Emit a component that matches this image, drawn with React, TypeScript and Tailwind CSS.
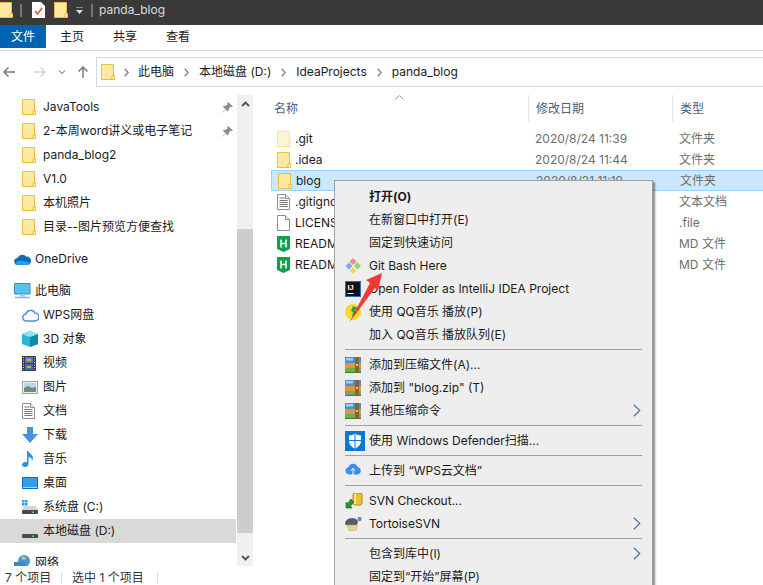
import React from 'react';

const FolderIcon = ({ faded = false }: { faded?: boolean }) => (
  <svg width="14" height="16" viewBox="0 0 14 16" className={faded ? 'shrink-0 opacity-45' : 'shrink-0'}>
    <path d="M.5.5h12v13h-1.5v2H.5z" fill="#fde9a0" stroke="#e9bc45" />
    <path d="M11 11.5h2.5v4H11z" fill="#fff3c4" stroke="#e9bc45" />
  </svg>
);

const DocIcon = ({ lines = false }: { lines?: boolean }) => (
  <svg width="13" height="16" viewBox="0 0 13 16" className="shrink-0">
    <path d="M.5.5h8l4 4v11H.5z" fill="#fff" stroke="#8f8f8f" />
    <path d="M8.5.5v4h4" fill="#eee" stroke="#8f8f8f" />
    {lines && <path d="M2.5 4h5M2.5 6.500h8M2.500 8.500h8M2.500 10.500h8M2.500 12.500h8" stroke="#777" />}
  </svg>
);

const HtmlIcon = () => (
  <svg width="13" height="16" viewBox="0 0 13 16" className="shrink-0">
    <path d="M0 0h13v13l-6.500 3L0 13z" fill="#13a04c" />
    <path d="M4 3.500v8M9 3.500v8M4 7.500h5" stroke="#fff" strokeWidth="1.500" fill="none" />
  </svg>
);

const Pin = () => (
  <svg width="11" height="11" viewBox="0 0 11 11" className="shrink-0">
    <path d="M6.500.5l4 4-1 .5-1-.5-2 2 0 2-1 .5-4-4 .5-1h2l2-2-.5-1zM3 7.500L.5 10.500" fill="#8b8b8b" stroke="#8b8b8b" strokeWidth=".6" />
  </svg>
);

const Crumb = () => (
  <svg width="5" height="9" viewBox="0 0 5 9" className="shrink-0">
    <path d="M.7.7l3.500 3.800L.7 8.300" fill="none" stroke="#808080" strokeWidth="1.300" />
  </svg>
);

const CloudSmall = () => (
  <svg width="17" height="11" viewBox="0 0 17 11" className="shrink-0">
    <path d="M4 11a3.500 3.500 0 0 1-.5-7A5 5 0 0 1 12 2.500 4.200 4.200 0 0 1 13.500 11z" fill="#0f6cbd" />
    <path d="M1 9c3-3 9-3 15 0l-2.500 2H4z" fill="#2a9be6" />
  </svg>
);

const MonitorIcon = () => (
  <svg width="17" height="16" viewBox="0 0 17 16" className="shrink-0">
    <path d="M.500.500h15.500v10.500H.500z" fill="#57c2ee" stroke="#4b87b8" />
    <path d="M6 11h5v2.500H6z" fill="#a7c7dd" />
    <path d="M1 14.500h15" stroke="#9ab1c4" strokeWidth="1.500" />
  </svg>
);

const WpsCloud = () => (
  <svg width="17" height="13" viewBox="0 0 17 13" className="shrink-0">
    <path d="M4.500 12a3.500 3.500 0 0 1-.5-7A4.700 4.700 0 0 1 12.800 4 4 4 0 0 1 13 12z" fill="#fff" stroke="#4e8df0" strokeWidth="1.500" />
  </svg>
);

const CubeIcon = () => (
  <svg width="16" height="16" viewBox="0 0 16 16" className="shrink-0">
    <path d="M8 0l8 3v10l-8 3-8-3V3z" fill="#2bb6cf" />
    <path d="M8 6l8-3v10l-8 3z" fill="#0f8aa6" />
    <path d="M8 0l8 3-8 3-8-3z" fill="#8fe6ef" />
  </svg>
);

const FilmIcon = () => (
  <svg width="14" height="15" viewBox="0 0 14 15" className="shrink-0">
    <rect width="14" height="15" fill="#3b3b40" />
    <rect x="3" y="1" width="8" height="6" fill="#5a76c9" />
    <rect x="3" y="8" width="8" height="6" fill="#4a65bc" />
    <rect x="5" y="3" width="4" height="2" fill="#d7b23a" />
    <rect x="5" y="10" width="4" height="2" fill="#d7b23a" />
    <path d="M1.500 1v13M12.500 1v13" stroke="#ddd" strokeDasharray="1 1.500" />
  </svg>
);

const PictureIcon = () => (
  <svg width="16" height="13" viewBox="0 0 16 13" className="shrink-0">
    <rect x=".5" y=".5" width="15" height="12" fill="#e8eef2" stroke="#a0a0a0" />
    <rect x="2" y="2" width="12" height="5" fill="#bcd6e8" />
    <path d="M2 7l4-2 4 2 4-1v5H2z" fill="#6d8d76" />
  </svg>
);

const DownIcon = () => (
  <svg width="16" height="16" viewBox="0 0 16 16" className="shrink-0">
    <path d="M5 0h6v7h5l-8 9-8-9h5z" fill="#4a90dc" />
  </svg>
);

const MusicIcon = () => (
  <svg width="12" height="16" viewBox="0 0 12 16" className="shrink-0">
    <path d="M5 0h1.500c.3 3 4.500 3.500 4.500 7 0 1-.4 2-1 2.500.2-2-2-3.500-3.500-3.800V13c0 1.700-1.500 3-3.500 3C1.500 16 0 15.200 0 13.800 0 12.200 1.700 11 3.500 11c.6 0 1.100.1 1.500.3z" fill="#1e96ea" />
  </svg>
);

const DesktopIcon = () => (
  <svg width="16" height="12" viewBox="0 0 16 12" className="shrink-0">
    <rect width="16" height="12" fill="#0d6fc4" />
    <path d="M1 1h14v9H1z" fill="#2f9eea" />
    <path d="M1 10h14v1H1z" fill="#fff" opacity=".7" />
  </svg>
);

const DriveIcon = ({ windows = false }: { windows?: boolean }) => (
  <svg width="16" height="14" viewBox="0 0 16 14" className="shrink-0">
    {windows && <path d="M0 0h2.500v2.500H0zM3 0h2.500v2.500H3zM0 3h2.500v2.500H0zM3 3h2.500v2.500H3z" fill="#16a5e8" />}
    <path d="M2 6h12l2 4H0z" fill="#d6d6d6" />
    <rect y="10" width="16" height="4" rx="1" fill="#47494b" />
    <rect x="10" y="11.500" width="2" height="1.500" fill="#52d45c" />
  </svg>
);

const NetworkIcon = () => (
  <svg width="17" height="16" viewBox="0 0 17 16" className="shrink-0">
    <circle cx="10" cy="6" r="6" fill="#4f95d6" />
    <path d="M7 2c2-1 5 0 5 2l-3 1z" fill="#a7d2a0" />
    <rect y="7" width="11" height="8" fill="#3f88c5" />
  </svg>
);

const GitIcon = () => (
  <svg width="16" height="16" viewBox="0 0 16 16">
    <path d="M8 0l3.500 3.500L8 7 4.500 3.500z" fill="#ef8d8d" />
    <path d="M12 4l4 4-3.500 3.500L9 8z" fill="#93d66c" />
    <path d="M8 9l3.500 3.500L8 16l-3.500-3.500z" fill="#f4d75e" />
    <path d="M4 4.500L7.500 8 4 11.500.5 8z" fill="#7da6f0" />
  </svg>
);

const IdeaIcon = () => (
  <svg width="16" height="16" viewBox="0 0 16 16">
    <rect x=".5" y=".5" width="15" height="15" fill="#111" stroke="#1f6fd6" />
    <text x="2.500" y="9" fontSize="7.500" fontWeight="700" fill="#fff" fontFamily="Liberation Sans, sans-serif">IJ</text>
    <path d="M2.500 12.500h6" stroke="#fff" />
  </svg>
);

const QQIcon = () => (
  <svg width="16" height="16" viewBox="0 0 16 16">
    <circle cx="8" cy="8" r="8" fill="#f6d92e" />
    <path d="M8 2l5 2-3 2 2 3-5 4 1-5-2-1z" fill="#24a556" />
  </svg>
);

const RarIcon = () => (
  <svg width="16" height="16" viewBox="0 0 16 16">
    <rect width="16" height="6" fill="#4a8fd0" />
    <path d="M1 1h7v2.500H1z" fill="#9ccbee" />
    <rect y="6" width="16" height="5" fill="#e4943f" />
    <rect y="11" width="16" height="3.500" fill="#6ab04f" />
    <rect y="14.500" width="16" height="1.500" fill="#3e7d30" />
    <rect x="10" width="4" height="16" fill="#8a6238" />
    <rect x="11" y="7" width="2" height="2" fill="#e8c65a" />
  </svg>
);

const ShieldIcon = () => (
  <svg width="20" height="20" viewBox="0 0 20 20">
    <rect width="20" height="20" fill="#0a78d7" />
    <path d="M10 2.500c2 1.500 4 2 6 2v5c0 4-2.500 6.500-6 8-3.500-1.500-6-4-6-8v-5c2 0 4-.5 6-2z" fill="#fff" />
    <path d="M10 2.500v15M4 9.500h12" stroke="#0a78d7" strokeWidth="1" />
  </svg>
);

const UploadIcon = () => (
  <svg width="16" height="15" viewBox="0 0 16 15">
    <path d="M4 11.500a3.700 3.700 0 0 1-.6-7.300A4.800 4.800 0 0 1 12.600 4 3.800 3.800 0 0 1 12.500 11.500z" fill="#3f8cf0" />
    <path d="M8 14.500V5.500M5.800 7.800L8 5.500l2.200 2.300" stroke="#fff" fill="none" />
  </svg>
);

const SvnIcon = () => (
  <svg width="18" height="16" viewBox="0 0 18 16">
    <rect x="8" width="9" height="12" rx="2" fill="#edc12f" stroke="#b58a12" />
    <path d="M10 1v10" stroke="#fff2a8" strokeWidth="1.500" />
    <path d="M1 15V9l1.500 1.500L6 6l3 3-3.500 4L7 15z" fill="#1f9a2e" stroke="#0d6a1a" strokeWidth=".6" />
  </svg>
);

const TurtleIcon = () => (
  <svg width="17" height="15" viewBox="0 0 17 15">
    <path d="M0 8a7 6 0 0 1 13-3l-1 4H1z" fill="#5a5878" />
    <circle cx="14.500" cy="3" r="2.200" fill="#6b8fb8" />
    <path d="M2 9h10.500L11 14.500H4z" fill="#e8d28a" stroke="#b8a055" strokeWidth=".5" />
  </svg>
);

const Chevron = () => (
  <svg width="8" height="13" viewBox="0 0 8 13">
    <path d="M.800.800L6.800 6.500.800 12.200" fill="none" stroke="#55709c" strokeWidth="1.200" />
  </svg>
);

const navGroups: { icon: React.ReactNode; label: string; indent?: boolean; pin?: boolean; active?: boolean }[][] = [
  [
    { icon: <FolderIcon />, label: 'JavaTools', indent: true, pin: true },
    { icon: <FolderIcon />, label: '2-本周word讲义或电子笔记', indent: true, pin: true },
    { icon: <FolderIcon />, label: 'panda_blog2', indent: true },
    { icon: <FolderIcon />, label: 'V1.0', indent: true },
    { icon: <FolderIcon />, label: '本机照片', indent: true },
    { icon: <FolderIcon />, label: '目录--图片预览方便查找', indent: true },
  ],
  [{ icon: <CloudSmall />, label: 'OneDrive' }],
  [
    { icon: <MonitorIcon />, label: '此电脑' },
    { icon: <WpsCloud />, label: 'WPS网盘', indent: true },
    { icon: <CubeIcon />, label: '3D 对象', indent: true },
    { icon: <FilmIcon />, label: '视频', indent: true },
    { icon: <PictureIcon />, label: '图片', indent: true },
    { icon: <DocIcon lines />, label: '文档', indent: true },
    { icon: <DownIcon />, label: '下载', indent: true },
    { icon: <MusicIcon />, label: '音乐', indent: true },
    { icon: <DesktopIcon />, label: '桌面', indent: true },
    { icon: <DriveIcon windows />, label: '系统盘 (C:)', indent: true },
    { icon: <DriveIcon />, label: '本地磁盘 (D:)', indent: true, active: true },
  ],
  [{ icon: <NetworkIcon />, label: '网络' }],
];

const files = [
  { icon: <FolderIcon faded />, name: '.git', date: '2020/8/24 11:39', type: '文件夹' },
  { icon: <FolderIcon />, name: '.idea', date: '2020/8/24 11:44', type: '文件夹' },
  { icon: <FolderIcon />, name: 'blog', date: '2020/8/21 11:19', type: '文件夹', selected: true },
  { icon: <DocIcon lines />, name: '.gitignore', date: '2020/8/21 11:10', type: '文本文档' },
  { icon: <DocIcon />, name: 'LICENSE.file', date: '2020/8/21 11:10', type: '.file' },
  { icon: <HtmlIcon />, name: 'README.md', date: '2020/8/21 11:10', type: 'MD 文件' },
  { icon: <HtmlIcon />, name: 'README_en.md', date: '2020/8/21 11:10', type: 'MD 文件' },
];

type MenuEntry = { label?: string; icon?: React.ReactNode; bold?: boolean; sub?: boolean };

const menu: MenuEntry[] = [
  { label: '打开(O)', bold: true },
  { label: '在新窗口中打开(E)' },
  { label: '固定到快速访问' },
  { label: 'Git Bash Here', icon: <GitIcon /> },
  { label: 'Open Folder as IntelliJ IDEA Project', icon: <IdeaIcon /> },
  { label: '使用 QQ音乐 播放(P)', icon: <QQIcon /> },
  { label: '加入 QQ音乐 播放队列(E)' },
  {},
  { label: '添加到压缩文件(A)...', icon: <RarIcon /> },
  { label: '添加到 "blog.zip" (T)', icon: <RarIcon /> },
  { label: '其他压缩命令', icon: <RarIcon />, sub: true },
  {},
  { label: '使用 Windows Defender扫描...', icon: <ShieldIcon /> },
  {},
  { label: '上传到 “WPS云文档”', icon: <UploadIcon /> },
  {},
  { label: 'SVN Checkout...', icon: <SvnIcon /> },
  { label: 'TortoiseSVN', icon: <TurtleIcon />, sub: true },
  {},
  { label: '包含到库中(I)', sub: true },
  { label: '固定到“开始”屏幕(P)' },
];

export default function App() {
  return (
    <div className="relative flex h-[585px] w-[763px] flex-col overflow-hidden bg-white font-['Inter','Noto_Sans_CJK_SC',sans-serif] text-[12px] text-[#1a1a1a]">
      {/* Title bar */}
      <div className="flex h-[25px] shrink-0 items-center overflow-hidden bg-[#3a3a3a] pb-[5px]">
        <div className="ml-[-1px]"><FolderIcon /></div>
        <div className="ml-[7px] h-[13px] w-[2px] border-x border-[#777]" />
        <svg width="13" height="16" viewBox="0 0 13 16" className="ml-[10px] shrink-0">
          <path d="M0 0h9l4 4v12H0z" fill="#fff" />
          <path d="M3 9l2.500 3L10 6" fill="none" stroke="#e0532a" strokeWidth="1.500" />
        </svg>
        <div className="ml-[9px]"><FolderIcon /></div>
        <svg width="7" height="7" viewBox="0 0 7 7" className="ml-[8px] shrink-0">
          <path d="M0 0h7" stroke="#ddd" />
          <path d="M0 3h7L3.500 7z" fill="#ddd" />
        </svg>
        <div className="ml-[8px] h-[13px] w-[2px] border-x border-[#777]" />
        <span className="ml-[6px] text-[12px] text-[#dcdcdc]">panda_blog</span>
      </div>

      {/* Ribbon tabs */}
      <div className="flex h-[26px] shrink-0 border-b border-[#dadada]">
        <div className="flex h-[23px] w-[46px] items-center justify-center bg-[#0063b1] text-white">文件</div>
        <div className="flex h-[23px] items-center pl-[14px]">
          <span className="w-[53px]">主页</span>
          <span className="w-[53px]">共享</span>
          <span>查看</span>
        </div>
      </div>

      {/* Address row */}
      <div className="flex h-[44px] shrink-0 items-start pt-[6px]">
        <div className="flex h-[30px] w-[96px] shrink-0 items-center">
          <svg width="90" height="14" viewBox="0 0 90 14" className="ml-[2px] shrink-0">
            <path d="M13 7H2M6.500 2.500L2 7l4.500 4.500" fill="none" stroke="#7a7a7a" strokeWidth="1.500" />
            <path d="M32 7h11M38.500 2.500L43 7l-4.500 4.500" fill="none" stroke="#d4d4d4" strokeWidth="1.500" />
            <path d="M57 5.500L60 8.500 63 5.500" fill="none" stroke="#9a9a9a" strokeWidth="1.200" />
            <path d="M81 13V2M76.500 6.500L81 2l4.500 4.500" fill="none" stroke="#7a7a7a" strokeWidth="1.500" />
          </svg>
        </div>
        <div className="flex h-[30px] grow items-center border-y border-l border-[#d9d9d9] pl-[4px]">
          <FolderIcon />
          <div className="ml-[9px]"><Crumb /></div>
          <span className="ml-[9px]">此电脑</span>
          <div className="ml-[10px]"><Crumb /></div>
          <span className="ml-[10px]">本地磁盘 (D:)</span>
          <div className="ml-[10px]"><Crumb /></div>
          <span className="ml-[10px]">IdeaProjects</span>
          <div className="ml-[10px]"><Crumb /></div>
          <span className="ml-[10px]">panda_blog</span>
        </div>
      </div>

      {/* Sidebar and file list */}
      <div className="flex min-h-0 grow">
        <div className="w-[237px] shrink-0 overflow-hidden">
          {navGroups.map((group, i) => (
            <div key={i} className="mb-[8px]">
              {group.map((item) => (
                <div
                  key={item.label}
                  className={`flex h-[24px] w-[236px] items-center ${item.active ? 'bg-[#d9d9d9]' : ''} ${item.indent ? 'pl-[22px]' : 'pl-[14px]'}`}
                >
                  <div className="flex w-[21px] shrink-0 justify-start">{item.icon}</div>
                  <span className="grow whitespace-nowrap">{item.label}</span>
                  {item.pin && <div className="mr-[3px]"><Pin /></div>}
                </div>
              ))}
            </div>
          ))}
        </div>

        {/* Sidebar scrollbar */}
        <div className="flex w-[16px] shrink-0 flex-col bg-[#f0f0f0]">
          <div className="flex h-[17px] shrink-0 items-center justify-center">
            <svg width="9" height="6" viewBox="0 0 9 6"><path d="M1 5l3.500-3.500L8 5" fill="none" stroke="#505050" strokeWidth="1.800" /></svg>
          </div>
          <div className="h-[117px] shrink-0" />
          <div className="h-[304px] shrink-0 bg-[#cdcdcd]" />
          <div className="grow" />
          <div className="flex h-[17px] shrink-0 items-center justify-center">
            <svg width="9" height="6" viewBox="0 0 9 6"><path d="M1 1l3.500 3.500L8 1" fill="none" stroke="#505050" strokeWidth="1.800" /></svg>
          </div>
        </div>

        <div className="grow pl-[18px]">
          <div className="relative grid h-[33px] grid-cols-[257px_144px_1fr] items-start text-[#4c607a]">
            <svg width="9" height="5" viewBox="0 0 9 5" className="absolute left-[124px] top-[0px]"><path d="M.5 4.500L4.500.5l4 4" fill="none" stroke="#9a9a9a" /></svg>
            <span className="flex h-[27px] items-center pl-[3px]">名称</span>
            <span className="flex h-[27px] items-center border-l border-[#e5e5e5] pl-[7px]">修改日期</span>
            <span className="flex h-[27px] items-center border-l border-[#e5e5e5] pl-[7px]">类型</span>
          </div>
          {files.map((file) => (
            <div
              key={file.name}
              className={`grid h-[21px] grid-cols-[257px_144px_1fr] items-center ${file.selected ? 'border-y border-l border-[#99d1ff] bg-[#cce8ff]' : ''}`}
            >
              <div className="flex items-center pl-[6px]">
                <div className="w-[18px]">{file.icon}</div>
                <span className="whitespace-nowrap">{file.name}</span>
              </div>
              <span className="pl-[7px] text-[#6d6d6d]">{file.date}</span>
              <span className="pl-[7px] text-[#6d6d6d]">{file.type}</span>
            </div>
          ))}
        </div>
      </div>

      {/* Status bar */}
      <div className="flex h-[19px] shrink-0 items-center pl-[5px] pt-[4px] text-[#333]">
        <span className="w-[56px]">7 个项目</span>
        <div className="h-[12px] w-px bg-[#e0e0e0]" />
        <span className="ml-[10px] w-[85px]">选中 1 个项目</span>
        <div className="h-[12px] w-px bg-[#e0e0e0]" />
      </div>

      {/* Context menu */}
      <div className="absolute left-[334px] top-[180px] w-[319px] border border-[#a0a0a0] bg-[#eeeeee] py-[4px] shadow-[2px_2px_2px_rgba(0,0,0,0.45)]">
        {menu.map((entry, i) =>
          entry.label ? (
            <div key={i} className="flex h-[23px] items-center">
              <div className="flex w-[34px] shrink-0 justify-start pl-[10px]">{entry.icon}</div>
              <span className={`grow whitespace-nowrap ${entry.bold ? 'font-bold' : ''}`}>{entry.label}</span>
              {entry.sub && <div className="mr-[11px] flex"><Chevron /></div>}
            </div>
          ) : (
            <div key={i} className="mx-[10px] my-[3px] h-px bg-[#a0a0a0]" />
          ),
        )}
      </div>

      {/* Red annotation arrow */}
      <svg width="40" height="56" viewBox="0 0 40 56" className="absolute left-[346px] top-[270px]">
        <path d="M36 3L20 10l4 3L3 53l26-35 3 3z" fill="#f03a3a" />
      </svg>
    </div>
  );
}
